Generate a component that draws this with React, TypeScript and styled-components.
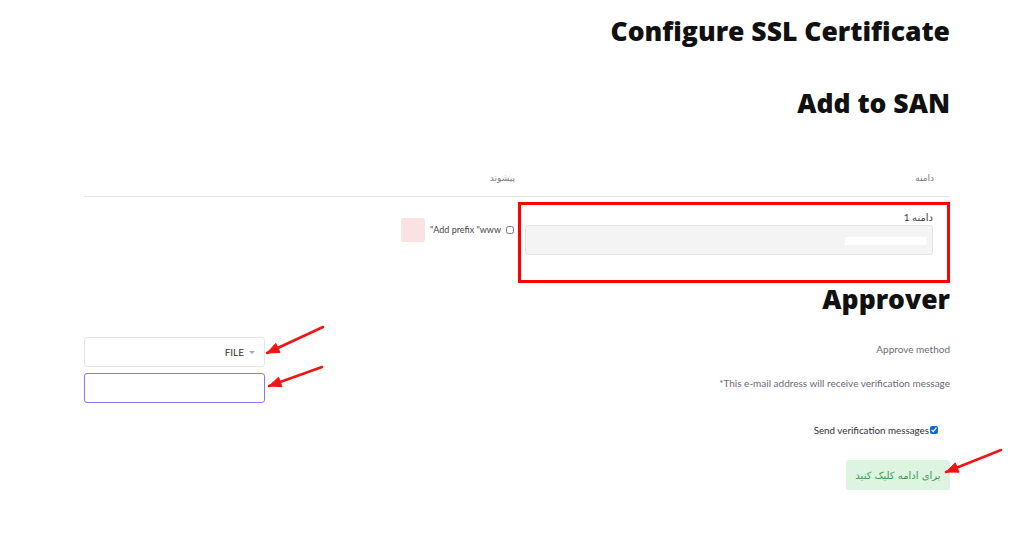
import styled, { createGlobalStyle } from "styled-components";

const GlobalStyle = createGlobalStyle`
  html, body {
    margin: 0;
    padding: 0;
    background: #ffffff;
  }
  body {
    font-family: Lato, "DejaVu Sans", sans-serif;
    color: #333;
  }
`;

const Page = styled.div`
  position: relative;
  width: 1024px;
  height: 542px;
  overflow: hidden;
`;

const Content = styled.div`
  direction: rtl;
  width: 866px;
  margin-left: 84px;
  padding-top: 15px;
`;

const Heading = styled.h2<{ $gap?: number }>`
  font-family: "Open Sans", sans-serif;
  font-weight: 800;
  font-size: 26.5px;
  line-height: 32px;
  color: #111;
  margin: ${(p) => p.$gap ?? 0}px 0 0 0;
`;

const Table = styled.div`
  margin-top: 41px;
  display: flex;
  flex-direction: column;
`;

const HeadRow = styled.div`
  display: grid;
  grid-template-columns: 432px 1fr;
  border-bottom: 1px solid #e9e9ec;
`;

const HeadCell = styled.div<{ $pad: number }>`
  font-size: 9px;
  line-height: 16px;
  color: #808080;
  padding: 10px ${(p) => p.$pad}px 10px 0;
`;

const BodyRow = styled.div`
  display: grid;
  grid-template-columns: 432px 1fr;
  align-items: start;
  padding-top: 5px;
`;

const DomainCell = styled.div`
  border: 3px solid #ff0000;
  padding: 5px 14px 25px 4px;
  display: flex;
  flex-direction: column;
`;

const FieldLabel = styled.label`
  font-size: 10px;
  line-height: 14px;
  color: #444;
  margin-bottom: 1px;
`;

const GreyField = styled.div`
  height: 28px;
  background: #f4f4f5;
  border: 1px solid #e4e4e7;
  border-radius: 3px;
  display: flex;
  align-items: center;
  padding-right: 6px;
`;

const Redacted = styled.span`
  width: 81px;
  height: 8px;
  background: #ffffff;
  margin-top: 2px;
`;

const PrefixCell = styled.div`
  display: flex;
  align-items: center;
  gap: 5px;
  padding: 16px 4px 0 0;
`;

const SmallBox = styled.input`
  width: 8px;
  height: 8px;
  margin: 0;
  accent-color: #0b6bd6;
`;

const PrefixText = styled.span`
  font-size: 9px;
  line-height: 14px;
  color: #444;
`;

const Swatch = styled.span`
  width: 24px;
  height: 24px;
  border-radius: 3px;
  background: #fbe2e2;
`;

const FormRow = styled.div<{ $gap: number }>`
  display: flex;
  justify-content: space-between;
  align-items: flex-start;
  margin-top: ${(p) => p.$gap}px;
`;

const RowText = styled.span<{ $top: number }>`
  font-size: 10px;
  line-height: 14px;
  color: #6b6b75;
  padding-top: ${(p) => p.$top}px;
`;

const SelectBox = styled.div`
  box-sizing: border-box;
  width: 181px;
  height: 30px;
  border: 1px solid #e6e6e9;
  border-radius: 3px;
  display: flex;
  align-items: center;
  gap: 5px;
  padding-right: 9px;
  font-size: 10px;
  color: #333;
`;

const Caret = styled.span`
  width: 0;
  height: 0;
  border-left: 3px solid transparent;
  border-right: 3px solid transparent;
  border-top: 3px solid #aaa;
  margin-top: 1px;
`;

const EmailInput = styled.input`
  box-sizing: border-box;
  width: 181px;
  height: 30px;
  border: 1px solid #9d72e6;
  border-radius: 3px;
  outline: none;
  background: #fff;
`;

const CheckLine = styled.label`
  display: flex;
  align-items: center;
  gap: 1px;
  margin-top: 20px;
  padding-right: 12px;
  font-size: 9.8px;
  line-height: 14px;
  color: #333;
`;

const SubmitButton = styled.button`
  margin-top: 23px;
  width: 104px;
  height: 30px;
  border: none;
  border-radius: 3px;
  background: #dcf4e0;
  color: #3b9a4f;
  font-family: "DejaVu Sans", sans-serif;
  font-size: 10px;
  cursor: pointer;
`;

const Overlay = styled.svg`
  position: absolute;
  left: 0;
  top: 0;
  pointer-events: none;
`;

type Arrow = { x1: number; y1: number; x2: number; y2: number };

const arrows: Arrow[] = [
  { x1: 323, y1: 327, x2: 267, y2: 353 },
  { x1: 322, y1: 367, x2: 269, y2: 386 },
  { x1: 1001, y1: 450, x2: 946, y2: 472 },
];

function head(a: Arrow) {
  const dx = a.x2 - a.x1;
  const dy = a.y2 - a.y1;
  const len = Math.hypot(dx, dy);
  const ux = dx / len;
  const uy = dy / len;
  const bx = a.x2 - ux * 12;
  const by = a.y2 - uy * 12;
  const px = -uy * 5;
  const py = ux * 5;
  return `${a.x2},${a.y2} ${bx + px},${by + py} ${bx - px},${by - py}`;
}

export default function App() {
  return (
    <Page>
      <GlobalStyle />
      <Content>
        <Heading>Configure SSL Certificate</Heading>
        <Heading $gap={40}>Add to SAN</Heading>

        <Table>
          <HeadRow>
            <HeadCell $pad={16}>دامنه</HeadCell>
            <HeadCell $pad={3}>پیشوند</HeadCell>
          </HeadRow>
          <BodyRow>
            <DomainCell>
              <FieldLabel>دامنه 1</FieldLabel>
              <GreyField>
                <Redacted />
              </GreyField>
            </DomainCell>
            <PrefixCell>
              <SmallBox type="checkbox" />
              <PrefixText>Add prefix "www"</PrefixText>
              <Swatch />
            </PrefixCell>
          </BodyRow>
        </Table>

        <Heading>Approver</Heading>

        <FormRow $gap={22}>
          <RowText $top={5}>Approve method</RowText>
          <SelectBox>
            <Caret />
            FILE
          </SelectBox>
        </FormRow>
        <FormRow $gap={6}>
          <RowText $top={3}>This e-mail address will receive verification message*</RowText>
          <EmailInput type="email" />
        </FormRow>

        <CheckLine>
          <SmallBox type="checkbox" defaultChecked />
          Send verification messages
        </CheckLine>

        <SubmitButton>برای ادامه کلیک کنید</SubmitButton>
      </Content>

      <Overlay width={1024} height={542}>
        {arrows.map((a, i) => (
          <g key={i} fill="#f01414" stroke="#f01414">
            <line x1={a.x1} y1={a.y1} x2={a.x2} y2={a.y2} strokeWidth={2.5} strokeLinecap="round" />
            <polygon points={head(a)} strokeWidth={1} />
          </g>
        ))}
      </Overlay>
    </Page>
  );
}
